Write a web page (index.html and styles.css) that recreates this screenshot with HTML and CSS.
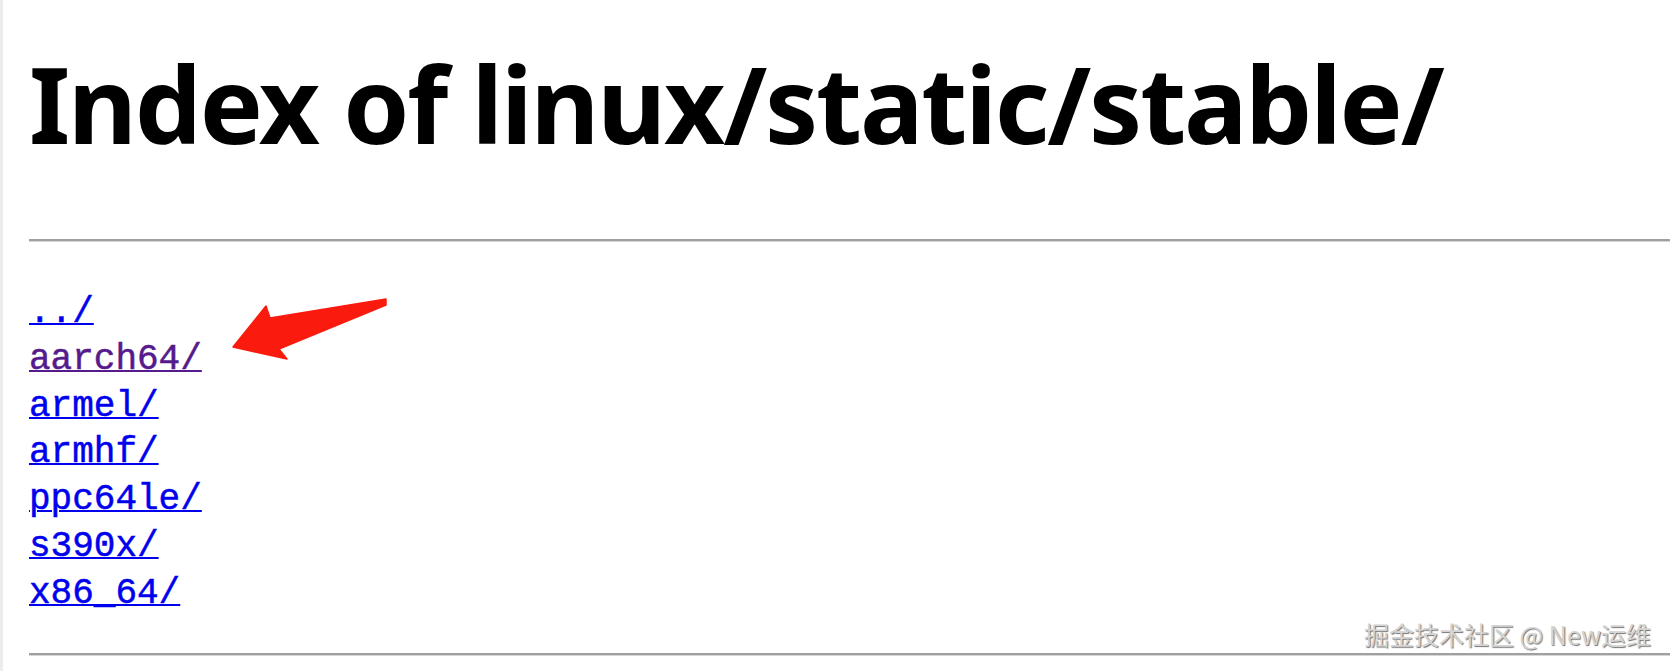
FILE: index.html
```html
<!DOCTYPE html>
<html lang="en">
<head>
<meta charset="utf-8">
<title>Index of linux/static/stable/</title>
<link rel="stylesheet" href="styles.css">
</head>
<body>
<div class="page">
  <h1 class="title">Index of linux/static/stable/</h1>
  <hr class="rule rule-top">
  <pre class="listing"><a class="link" href="../">../</a>
<a class="link visited" href="aarch64/">aarch64/</a>
<a class="link" href="armel/">armel/</a>
<a class="link" href="armhf/">armhf/</a>
<a class="link" href="ppc64le/">ppc64le/</a>
<a class="link" href="s390x/">s390x/</a>
<a class="link" href="x86_64/">x86_64/</a></pre>
  <hr class="rule rule-bottom">
  <svg class="arrow" width="160" height="64" viewBox="0 0 160 64" aria-hidden="true">
    <polygon points="0,47 33,6 37,18 153,-1 153,5 46,49 54,59" fill="#fa1b0e" stroke="#fa1b0e" stroke-width="1.5" stroke-linejoin="round"/>
  </svg>
  <div class="watermark">掘金技术社区 @ New运维</div>
</div>
</body>
</html>
```
FILE: styles.css
```css
html, body {
  margin: 0;
  padding: 0;
  background: #ffffff;
}

.page {
  position: relative;
  height: 671px;
  overflow: hidden;
  box-sizing: border-box;
  border-left: 3px solid #ececec;
  padding-left: 26px;
}

.title {
  margin: 0;
  padding-top: 43px;
  font-family: "Noto Sans", "Open Sans", sans-serif;
  font-weight: 700;
  font-size: 106px;
  line-height: 120px;
  letter-spacing: -2.15px;
  color: #000000;
  white-space: nowrap;
}

.rule {
  margin: 0;
  height: 0;
  border: 0;
  border-top: 2px solid #a0a0a0;
  border-bottom: 1px solid #d6d6d6;
}

.rule-top {
  margin-top: 76px;
}

.listing {
  margin: 48px 0 0 0;
  font-family: "Liberation Mono", "Courier New", monospace;
  font-size: 36px;
  line-height: 46.8px;
}

.link {
  color: #0000ee;
  text-decoration: underline;
  text-decoration-thickness: 2px;
  -webkit-text-stroke: 0.5px currentColor;
}

.visited {
  color: #551a8b;
}

.rule-bottom {
  margin-top: 35px;
}

.arrow {
  position: absolute;
  left: 230px;
  top: 300px;
  overflow: visible;
}

.watermark {
  position: absolute;
  left: 1361px;
  top: 618px;
  font-family: "Noto Sans CJK SC", "Noto Sans", sans-serif;
  font-size: 25px;
  line-height: 32px;
  color: #d4d4d4;
  text-shadow: 1px 1px 1px rgba(0, 0, 0, 0.55);
  white-space: nowrap;
}
```
